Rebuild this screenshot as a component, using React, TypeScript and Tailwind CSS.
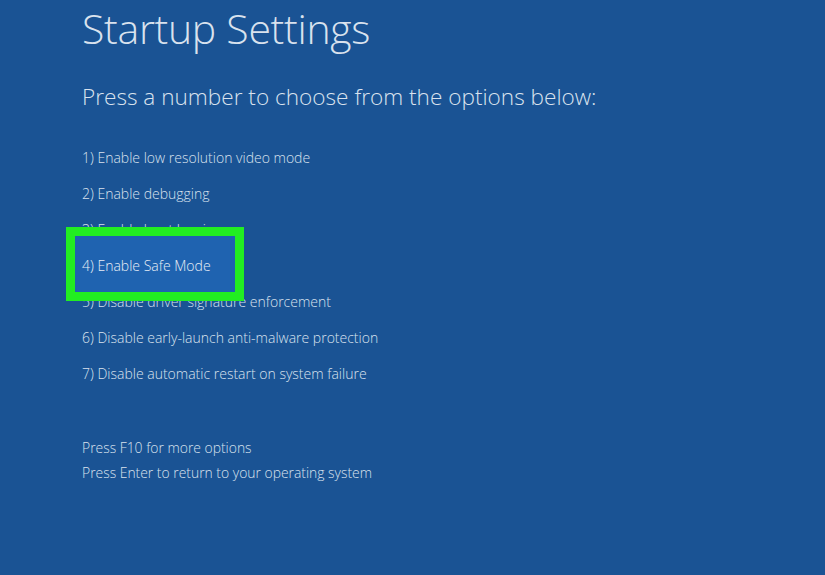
export default function App() {
  const options = [
    "1) Enable low resolution video mode",
    "2) Enable debugging",
    "3) Enable boot logging",
    "4) Enable Safe Mode",
    "5) Disable driver signature enforcement",
    "6) Disable early-launch anti-malware protection",
    "7) Disable automatic restart on system failure",
  ];

  return (
    <div
      className="w-[825px] h-[575px] overflow-hidden bg-[#1a5394] text-[#d9e2ee]"
      style={{ fontFamily: '"Open Sans", "Noto Sans", sans-serif' }}
    >
      <div className="pl-[82px] pt-0">
        <h1 className="text-[41px] leading-[56px] font-light tracking-[-0.3px]">Startup Settings</h1>
        <p className="mt-[26px] text-[22.6px] leading-[30px] font-light">
          Press a number to choose from the options below:
        </p>
        <ul className="mt-[35px] flex flex-col gap-[14px] text-[14px] leading-[22px] font-light">
          {options.map((o, i) =>
            i === 3 ? (
              <li key={o} className="relative">
                {/* green highlight box, drawn over neighbours */}
                <div className="absolute left-[-16px] top-[-28px] w-[178px] h-[74px] border-[9px] border-[#22ee22] bg-[#1f63b0] z-10" />
                <span className="relative z-20 text-[#e8eef6]">{o}</span>
              </li>
            ) : (
              <li key={o}>{o}</li>
            )
          )}
        </ul>
        <div className="mt-[52px] flex flex-col gap-[3px] text-[13.9px] leading-[22px] font-light">
          <div>Press F10 for more options</div>
          <div>Press Enter to return to your operating system</div>
        </div>
      </div>
    </div>
  );
}
